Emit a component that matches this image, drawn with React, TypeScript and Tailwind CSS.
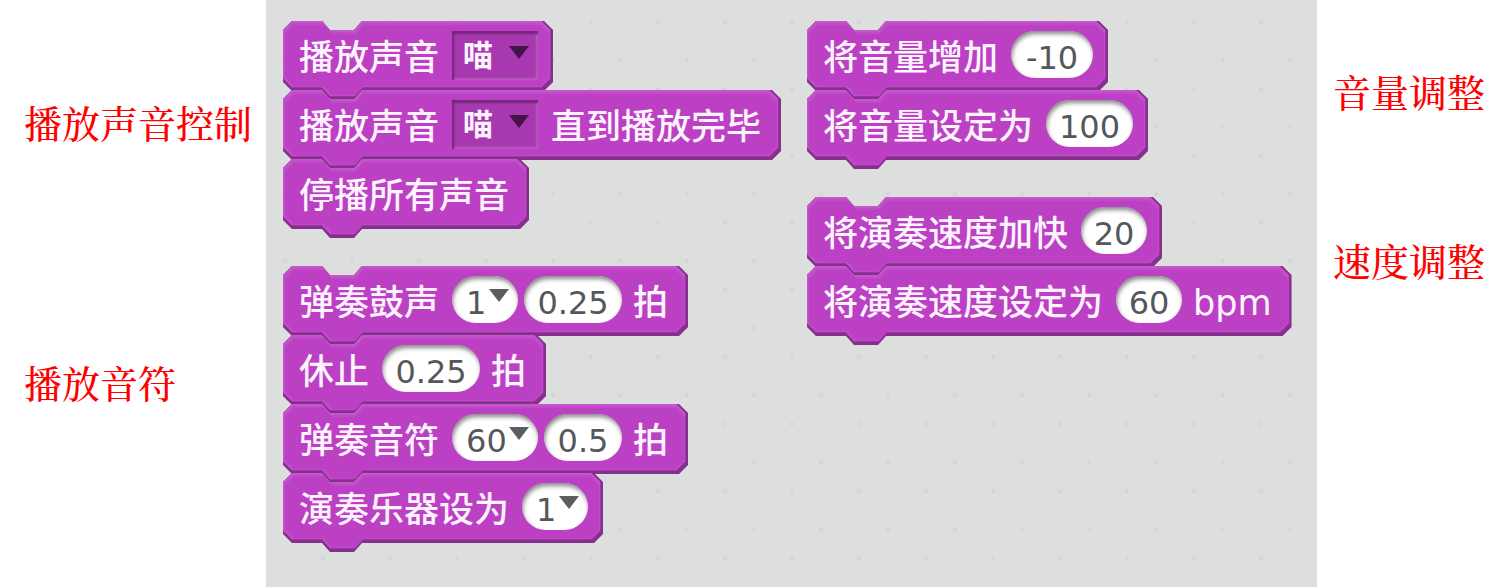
import type { ReactNode } from "react";

const SHAPE =
  "[clip-path:polygon(0_9px,9px_0,39px_0,47px_9px,71px_9px,79px_0,calc(100%_-_9px)_0,100%_9px,100%_calc(100%_-_18px),calc(100%_-_9px)_calc(100%_-_9px),79px_calc(100%_-_9px),71px_100%,47px_100%,39px_calc(100%_-_9px),9px_calc(100%_-_9px),0_calc(100%_-_18px))]";

const BACKDROP =
  "bg-[#dddfde] bg-[image:radial-gradient(circle_at_57px_22px,#d3d5d4_1px,transparent_3px),radial-gradient(circle_at_19px_60px,#d3d5d4_1px,transparent_3px)] bg-[size:67px_67px]";

function Block({ children, endsWithText = false }: { children: ReactNode; endsWithText?: boolean }) {
  return (
    <div
      className={`relative flex h-[69px] w-fit items-start pl-4 pt-[10px] ${
        endsWithText ? "pr-5" : "pr-[15px]"
      }`}
    >
      <span aria-hidden="true" className="absolute inset-x-0 top-0 -bottom-[10px]">
        <span className={`absolute inset-0 bg-[#85308c] ${SHAPE}`} />
        <span className={`absolute top-0 left-0 right-[2px] bottom-[3px] bg-[#9a35a2] ${SHAPE}`} />
        <span className={`absolute top-0 left-0 right-[3px] bottom-[4px] bg-[#c458cb] ${SHAPE}`} />
        <span className={`absolute top-[2px] left-px right-[3px] bottom-[4px] bg-[#c04bc8] ${SHAPE}`} />
        <span className={`absolute top-[4px] left-[2px] right-[4px] bottom-[5px] bg-[#bb40c3] ${SHAPE}`} />
      </span>
      {children}
    </div>
  );
}

function Text({ children }: { children: string }) {
  return (
    <span className="relative pt-[7px] text-[35px] leading-[40px] font-medium whitespace-nowrap text-[#fdf3fe]">
      {children}
    </span>
  );
}

function Arrow({ className }: { className: string }) {
  return (
    <svg
      aria-hidden="true"
      viewBox="0 0 20 13"
      className={`pointer-events-none absolute right-[9px] h-[13px] w-[20px] ${className}`}
    >
      <path d="M0 0H20L10 13Z" fill="currentColor" />
    </svg>
  );
}

const PILL =
  "block h-[47px] w-full appearance-none rounded-full bg-white pt-[7px] text-[32px] leading-[38px] text-[#55575a] outline-none shadow-[inset_1px_3px_4px_rgba(60,60,60,0.6)]";

function Value({ label, value, width }: { label: string; value: string; width: string }) {
  return (
    <label className={`relative block shrink-0 ${width}`}>
      <input aria-label={label} defaultValue={value} className={`${PILL} text-center`} />
    </label>
  );
}

function PickValue({ label, value, width }: { label: string; value: string; width: string }) {
  return (
    <label className={`relative block shrink-0 ${width}`}>
      <select aria-label={label} defaultValue={value} className={`${PILL} pl-[14px]`}>
        <option value={value}>{value}</option>
      </select>
      <Arrow className="top-[13px] text-[#5c5d60]" />
    </label>
  );
}

function SoundPick() {
  return (
    <label className="relative block w-[86px] shrink-0">
      <select
        aria-label="声音"
        className="block h-[49px] w-full appearance-none bg-[#a838b0] pl-[11px] text-[30px] leading-[38px] font-bold text-[#fdf3fe] outline-none shadow-[inset_2px_3px_2px_#74267b,inset_-2px_-2px_2px_#b75cbe]"
      >
        <option>喵</option>
      </select>
      <Arrow className="top-[15px] text-[#431448]" />
    </label>
  );
}

function Label({ children }: { children: string }) {
  return <h2 className="text-[38px] leading-[38px] font-medium whitespace-nowrap text-[#ff0000]">{children}</h2>;
}

export default function App() {
  return (
    <main className="flex min-h-screen bg-white font-['DejaVu_Sans','Noto_Sans_CJK_SC',sans-serif]">
      <aside className="flex w-[266px] shrink-0 flex-col gap-[222px] pt-[103px] pl-6 font-['Noto_Serif_CJK_SC','Noto_Sans_CJK_SC',serif]">
        <Label>播放声音控制</Label>
        <Label>播放音符</Label>
      </aside>

      <section className={`flex flex-1 pt-[21px] pl-[17px] ${BACKDROP}`}>
        <div className="flex w-[524px] shrink-0 flex-col gap-[38px]">
          <div>
            <Block>
              <div className="flex gap-[13px]">
                <Text>播放声音</Text>
                <SoundPick />
              </div>
            </Block>
            <Block endsWithText>
              <div className="flex gap-[13px]">
                <Text>播放声音</Text>
                <SoundPick />
                <Text>直到播放完毕</Text>
              </div>
            </Block>
            <Block endsWithText>
              <Text>停播所有声音</Text>
            </Block>
          </div>

          <div>
            <Block endsWithText>
              <div className="flex gap-[13px]">
                <Text>弹奏鼓声</Text>
                <div className="flex gap-[11px]">
                  <div className="flex gap-[6px]">
                    <PickValue label="鼓声" value="1" width="w-[66px]" />
                    <Value label="拍数" value="0.25" width="w-[98px]" />
                  </div>
                  <Text>拍</Text>
                </div>
              </div>
            </Block>
            <Block endsWithText>
              <div className="flex gap-[13px]">
                <Text>休止</Text>
                <div className="flex gap-[11px]">
                  <Value label="拍数" value="0.25" width="w-[98px]" />
                  <Text>拍</Text>
                </div>
              </div>
            </Block>
            <Block endsWithText>
              <div className="flex gap-[13px]">
                <Text>弹奏音符</Text>
                <div className="flex gap-[11px]">
                  <div className="flex gap-[6px]">
                    <PickValue label="音符" value="60" width="w-[86px]" />
                    <Value label="拍数" value="0.5" width="w-[78px]" />
                  </div>
                  <Text>拍</Text>
                </div>
              </div>
            </Block>
            <Block>
              <div className="flex gap-[13px]">
                <Text>演奏乐器设为</Text>
                <PickValue label="乐器" value="1" width="w-[66px]" />
              </div>
            </Block>
          </div>
        </div>

        <div className="flex flex-col gap-[38px]">
          <div>
            <Block>
              <div className="flex gap-[13px]">
                <Text>将音量增加</Text>
                <Value label="音量增加" value="-10" width="w-[82px]" />
              </div>
            </Block>
            <Block>
              <div className="flex gap-[13px]">
                <Text>将音量设定为</Text>
                <Value label="音量" value="100" width="w-[87px]" />
              </div>
            </Block>
          </div>

          <div>
            <Block>
              <div className="flex gap-[13px]">
                <Text>将演奏速度加快</Text>
                <Value label="速度加快" value="20" width="w-[66px]" />
              </div>
            </Block>
            <Block endsWithText>
              <div className="flex gap-[13px]">
                <Text>将演奏速度设定为</Text>
                <div className="flex gap-[11px]">
                  <Value label="速度" value="60" width="w-[66px]" />
                  <Text>bpm</Text>
                </div>
              </div>
            </Block>
          </div>
        </div>
      </section>

      <aside className="flex w-[192px] shrink-0 flex-col gap-[131px] pt-[72px] pl-4 font-['Noto_Serif_CJK_SC','Noto_Sans_CJK_SC',serif]">
        <Label>音量调整</Label>
        <Label>速度调整</Label>
      </aside>
    </main>
  );
}
